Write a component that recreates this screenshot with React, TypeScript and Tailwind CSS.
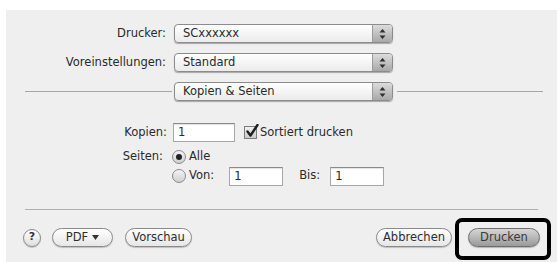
import type { ReactNode } from 'react';

function Arrows() {
  return (
    <svg width="7" height="12" viewBox="0 0 7 12" fill="#2e2e2e">
      <path d="M3.5 1 L6.5 4.5 L0.5 4.5 Z" />
      <path d="M0.5 7.5 L6.5 7.5 L3.5 11 Z" />
    </svg>
  );
}

function Popup({ label }: { label: string }) {
  return (
    <div className="flex h-[19px] w-[219px] overflow-hidden rounded-[4px] border border-[#8c8c8c] bg-gradient-to-b from-white to-[#ebebeb] shadow-[0_1px_1px_rgba(0,0,0,0.3)]">
      <span className="flex-1 pl-[8px] leading-[17px] text-[#2a2a2a]">{label}</span>
      <span className="flex w-[20px] items-center justify-center border-l border-[#9c9c9c] bg-gradient-to-b from-[#dcdcdc] to-[#a8a8a8]">
        <Arrows />
      </span>
    </div>
  );
}

function Field({ value, className }: { value: string; className: string }) {
  return (
    <div
      className={`h-[19px] border border-[#a8a8a8] border-t-[#8a8a8a] bg-white pl-[4px] leading-[17px] text-[#2a2a2a] shadow-[inset_0_1px_1px_rgba(0,0,0,0.12)] ${className}`}
    >
      {value}
    </div>
  );
}

function Radio({ on }: { on?: boolean }) {
  return (
    <span className="flex h-[14px] w-[14px] items-center justify-center rounded-full border border-[#8a8a8a] bg-gradient-to-b from-[#f4f4f4] to-[#cfcfcf]">
      {on && <span className="h-[6px] w-[6px] rounded-full bg-[#222]" />}
    </span>
  );
}

function Button({ children, className }: { children: ReactNode; className: string }) {
  return (
    <div
      className={`flex h-[19px] items-center justify-center rounded-full border border-[#8a8a8a] bg-gradient-to-b from-white to-[#e6e6e6] text-[#2e2e2e] shadow-[0_1px_1px_rgba(0,0,0,0.2)] ${className}`}
    >
      {children}
    </div>
  );
}

export default function App() {
  return (
    <div className="h-[262px] w-[557px] bg-white pl-[6px] pt-[10px] font-['DejaVu_Sans',sans-serif] text-[11.5px]">
      <div className="h-full bg-[#efefef] pt-[14px]">
        {/* Drucker */}
        <div className="flex h-[19px] items-center">
          <span className="w-[160px] text-right text-[#2a2a2a]">Drucker:</span>
          <div className="ml-[8px]">
            <Popup label="SCxxxxxx" />
          </div>
        </div>
        {/* Voreinstellungen */}
        <div className="mt-[10px] flex h-[19px] items-center">
          <span className="w-[160px] text-right text-[#2a2a2a]">Voreinstellungen:</span>
          <div className="ml-[8px]">
            <Popup label="Standard" />
          </div>
        </div>
        {/* Kopien & Seiten separator */}
        <div className="mt-[10px] flex h-[19px] items-center pl-[19px]">
          <span className="h-px w-[147px] bg-[#a6a6a6]" />
          <div className="ml-[2px]">
            <Popup label="Kopien & Seiten" />
          </div>
          <span className="ml-[4px] h-px w-[146px] bg-[#a6a6a6]" />
        </div>

        {/* Kopien */}
        <div className="mt-[22px] flex h-[19px] items-center">
          <span className="w-[161px] text-right text-[#2a2a2a]">Kopien:</span>
          <Field value="1" className="ml-[6px] w-[62px]" />
          <span className="relative ml-[9px] h-[13px] w-[13px] border border-[#7c7c7c] bg-gradient-to-b from-[#f2f2f2] to-[#c9c9c9]">
            <svg className="absolute -top-[3px] left-[1px]" width="13" height="14" viewBox="0 0 13 14">
              <path d="M1.5 7.5 L4.5 11.5 L11.5 1" fill="none" stroke="#1e1e1e" strokeWidth="2.4" strokeLinecap="round" strokeLinejoin="round" />
            </svg>
          </span>
          <span className="ml-[3px] text-[#2a2a2a]">Sortiert drucken</span>
        </div>

        {/* Seiten */}
        <div className="mt-[8px] flex h-[14px] items-center">
          <span className="w-[157px] text-right text-[#2a2a2a]">Seiten:</span>
          <span className="ml-[9px]">
            <Radio on />
          </span>
          <span className="ml-[3px] text-[#2a2a2a]">Alle</span>
        </div>
        <div className="mt-[2px] flex h-[20px] items-center">
          <span className="ml-[166px]">
            <Radio />
          </span>
          <span className="ml-[3px] text-[#2a2a2a]">Von:</span>
          <Field value="1" className="ml-[15px] w-[54px]" />
          <span className="ml-[16px] text-[#2a2a2a]">Bis:</span>
          <Field value="1" className="ml-[10px] w-[54px]" />
        </div>

        {/* bottom separator */}
        <div className="ml-[19px] mt-[23px] h-px w-[513px] bg-[#b0b0b0]" />

        {/* buttons */}
        <div className="mt-[18px] flex h-[19px] items-center">
          <span className="ml-[17px] flex h-[18px] w-[18px] items-center justify-center rounded-full border border-[#8a8a8a] bg-gradient-to-b from-white to-[#dedede] text-[11px] font-bold text-[#333] shadow-[0_1px_1px_rgba(0,0,0,0.2)]">
            ?
          </span>
          <Button className="ml-[11px] w-[61px] gap-[4px]">
            PDF
            <svg width="7" height="5" viewBox="0 0 7 5">
              <path d="M0 0 L7 0 L3.5 5 Z" fill="#333" />
            </svg>
          </Button>
          <Button className="ml-[12px] w-[67px]">Vorschau</Button>
          <Button className="ml-[184px] w-[76px]">Abbrechen</Button>
          <div className="relative ml-[16px]">
            <div className="flex h-[19px] w-[72px] items-center justify-center rounded-full border border-[#6e6e6e] bg-gradient-to-b from-[#d6d6d6] to-[#9a9a9a] text-[#3a3a3a] shadow-[0_1px_1px_rgba(0,0,0,0.25)]">
              Drucken
            </div>
            <span className="absolute -bottom-[13px] -left-[13px] -right-[11px] -top-[10px] rounded-[7px] border-[4px] border-black" />
          </div>
        </div>
      </div>
    </div>
  );
}
